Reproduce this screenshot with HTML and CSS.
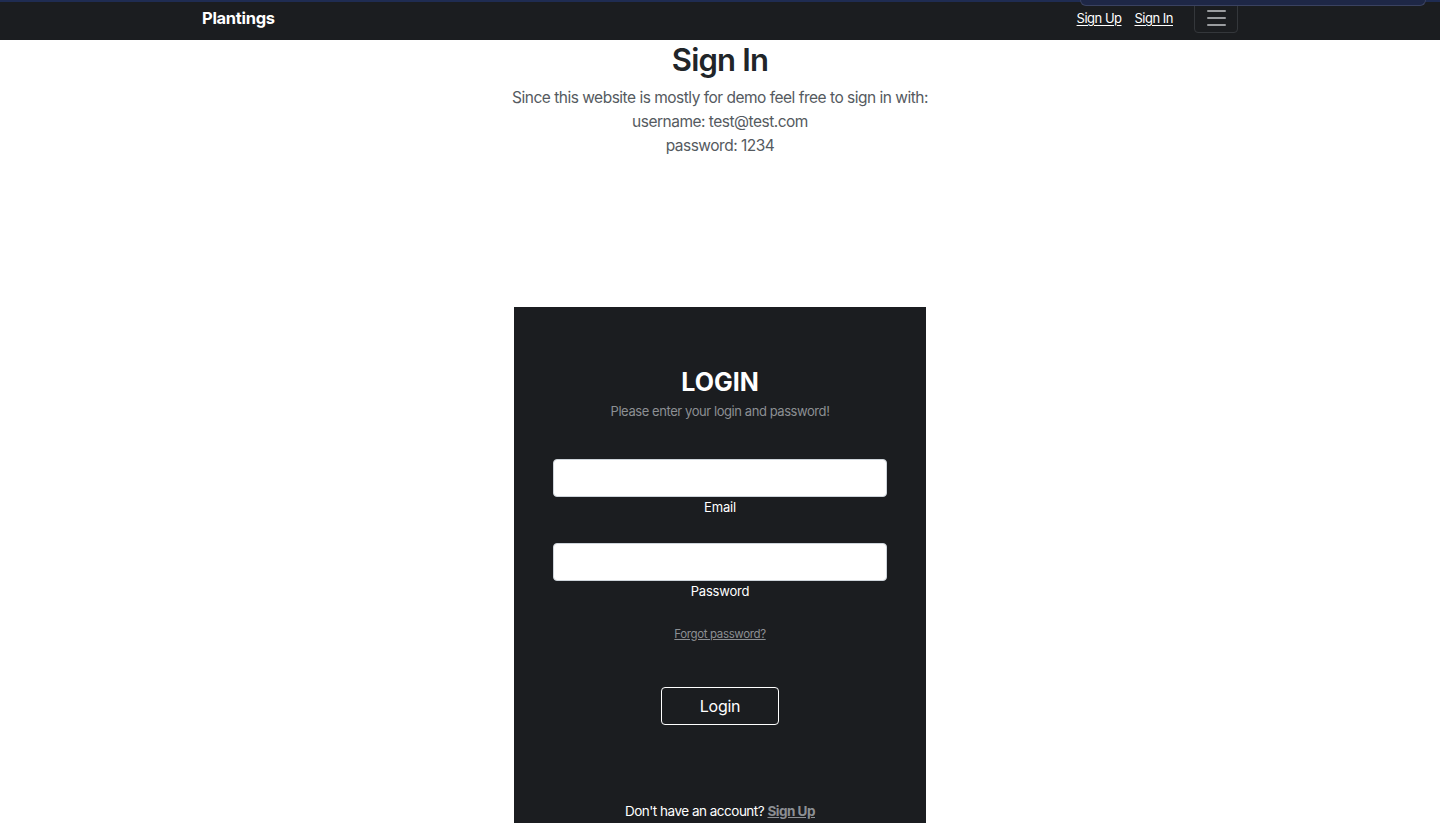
FILE: index.html
```html
<!DOCTYPE html>
<html lang="en">
<head>
<meta charset="utf-8">
<title>Plantings - Sign In</title>
<link rel="stylesheet" href="styles.css">
</head>
<body>
<div class="topline"></div>
<div class="overlay-tab"></div>
<nav class="navbar">
  <div class="nav-inner">
    <a class="brand" href="#">Plantings</a>
    <div class="nav-right">
      <a class="nav-link" href="#">Sign Up</a>
      <a class="nav-link" href="#">Sign In</a>
      <button class="toggler" aria-label="Toggle navigation">
        <span class="bar"></span><span class="bar"></span><span class="bar"></span>
      </button>
    </div>
  </div>
</nav>
<main class="page">
  <h1 class="title">Sign In</h1>
  <p class="lead">Since this website is mostly for demo feel free to sign in with:<br>username: test@test.com<br>password: 1234</p>
  <section class="card">
    <h2 class="card-title">LOGIN</h2>
    <p class="card-sub">Please enter your login and password!</p>
    <div class="field">
      <input class="input" type="email" id="email">
      <label class="label" for="email">Email</label>
    </div>
    <div class="field field-second">
      <input class="input" type="password" id="password">
      <label class="label" for="password">Password</label>
    </div>
    <a class="forgot" href="#">Forgot password?</a>
    <button class="login-btn">Login</button>
    <p class="signup">Don't have an account? <a href="#">Sign Up</a></p>
  </section>
</main>
</body>
</html>
```
FILE: styles.css
```css
html, body {
  margin: 0;
  padding: 0;
  background: #ffffff;
  font-family: Inter, "Noto Sans", "Liberation Sans", sans-serif;
  overflow: hidden;
}
.topline {
  height: 2px;
  background: #1f2c52;
}
.overlay-tab {
  position: absolute;
  top: 0;
  left: 1080px;
  width: 344px;
  height: 5px;
  background: #1e2746;
  border: 1px solid #3a4260;
  border-top: none;
  border-radius: 0 0 8px 8px;
  z-index: 5;
}
.navbar {
  height: 38px;
  background: #1b1d20;
}
.nav-inner {
  width: 1036px;
  margin: 0 auto;
  height: 100%;
  display: flex;
  align-items: flex-start;
  justify-content: space-between;
}
.brand {
  color: #ffffff;
  font-weight: 700;
  font-size: 16.5px;
  text-decoration: none;
  line-height: 33px;
  letter-spacing: -0.3px;
}
.nav-right {
  display: flex;
  align-items: flex-start;
}
.nav-link {
  color: #ffffff;
  font-size: 13px;
  line-height: 33px;
  margin-right: 13px;
  letter-spacing: -0.5px;
  text-decoration: underline;
  text-underline-offset: 2px;
}
.nav-link + .nav-link {
  margin-right: 21px;
}
.toggler {
  margin-top: -4px;
  width: 44px;
  height: 35px;
  background: transparent;
  border: 1px solid #34373b;
  border-radius: 4px;
  display: flex;
  flex-direction: column;
  align-items: center;
  justify-content: center;
  gap: 5px;
  padding: 4px 0 0;
}
.toggler .bar {
  display: block;
  width: 19px;
  height: 2px;
  background: #9a9c9f;
  border-radius: 1px;
}
.page {
  display: flex;
  flex-direction: column;
  align-items: center;
}
.title {
  margin: 0;
  padding-top: 1px;
  font-size: 31px;
  font-weight: 600;
  color: #212529;
  line-height: 38px;
  letter-spacing: -0.8px;
}
.lead {
  margin: 7px 0 0;
  text-align: center;
  font-size: 15.5px;
  line-height: 24px;
  color: #555a60;
  font-weight: 400;
  letter-spacing: -0.5px;
}
.card {
  margin-top: 149px;
  width: 412px;
  background: #1b1d20;
  padding: 59px 39px 80px;
  box-sizing: border-box;
  display: flex;
  flex-direction: column;
  align-items: center;
}
.card-title {
  margin: 0;
  color: #ffffff;
  font-size: 25px;
  font-weight: 700;
  line-height: 32px;
}
.card-sub {
  margin: 3px 0 0;
  color: #8c8f93;
  font-size: 13px;
  line-height: 20px;
  letter-spacing: -0.43px;
}
.field {
  width: 100%;
  margin-top: 38px;
  display: flex;
  flex-direction: column;
  align-items: center;
}
.field-second {
  margin-top: 27px;
}
.input {
  width: 100%;
  height: 38px;
  box-sizing: border-box;
  border: 1px solid #ced4da;
  border-radius: 4px;
  background: #ffffff;
  margin: 0;
}
.label {
  color: #ffffff;
  font-size: 13px;
  line-height: 18px;
  margin-top: 1px;
  letter-spacing: -0.2px;
}
.forgot {
  margin-top: 25px;
  color: #8c8f93;
  font-size: 11.5px;
  line-height: 18px;
  letter-spacing: -0.37px;
  text-decoration: underline;
}
.login-btn {
  margin-top: 44px;
  width: 118px;
  height: 38px;
  background: transparent;
  border: 1px solid #ffffff;
  border-radius: 4px;
  color: #ffffff;
  font-family: inherit;
  font-size: 16px;
  letter-spacing: -0.3px;
}
.signup {
  margin: 76px 0 0;
  color: #ffffff;
  font-size: 13.5px;
  line-height: 20px;
  letter-spacing: -0.5px;
}
.signup a {
  color: #8c8f93;
  font-weight: 700;
}
```
